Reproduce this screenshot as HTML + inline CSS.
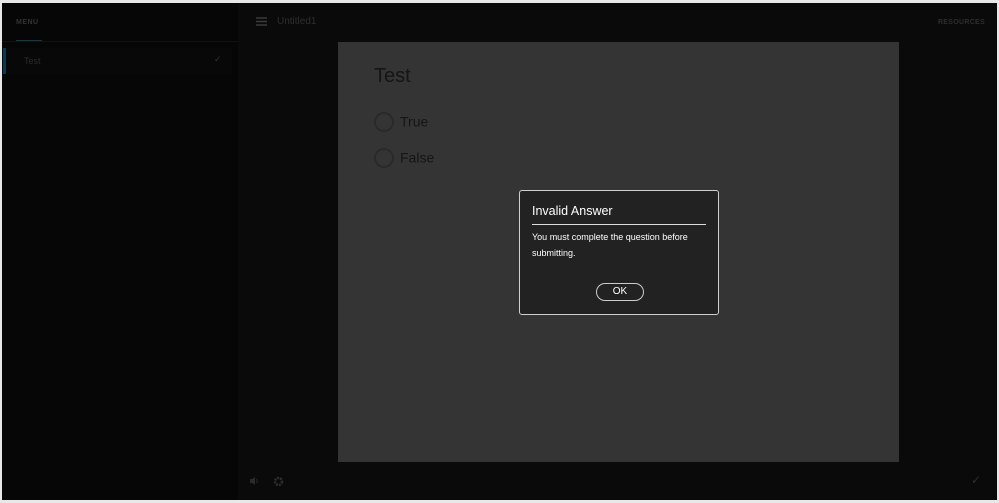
<!DOCTYPE html>
<html><head><style>
body{margin:0;width:999px;height:503px;background:#e8e8e8;position:relative;overflow:hidden;font-family:"Liberation Sans",sans-serif}
.frame{position:absolute;left:2px;top:3px;width:995px;height:497px;background:#0a0a0a}
.side{position:absolute;left:0;top:0;width:236px;height:497px;background:#060606}
.menu{position:absolute;left:14px;top:16px;font-size:7px;font-weight:bold;color:#333;letter-spacing:.5px}
.ul{position:absolute;left:14px;top:37px;width:26px;height:1px;background:#0d3a48}
.sep{position:absolute;left:0;top:38px;width:236px;height:1px;background:#111}
.item{position:absolute;left:0;top:45px;width:230px;height:26px;background:#080808}
.bar{position:absolute;left:1px;top:45px;width:3px;height:26px;background:#0d3a48}
.item span{position:absolute;left:22px;top:8px;font-size:9px;color:#2a2a2a}
.title{position:absolute;left:275px;top:13px;font-size:10px;color:#2e2e2e}
.res{position:absolute;right:12px;top:16px;font-size:7px;font-weight:bold;color:#2e2e2e;letter-spacing:.3px}
.panel{position:absolute;left:336px;top:39px;width:561px;height:420px;background:#343434}
.q{position:absolute;left:36px;top:23px;font-size:20px;color:#151515}
.opt{position:absolute;left:36px;font-size:14px;color:#151515}
.opt i{display:inline-block;width:16px;height:16px;border:2px solid #2a2a2a;border-radius:50%;vertical-align:middle;margin-right:6px;position:relative;top:-1px}
.dlg{position:absolute;left:519px;top:190px;width:198px;height:123px;background:#222;border:1px solid #cfcfcf;border-radius:3px}
.dlg h1{position:absolute;left:12px;top:13px;margin:0;font-size:12.5px;font-weight:normal;color:#fff}
.hr{position:absolute;left:12px;top:33px;width:174px;height:1px;background:#ddd}
.dlg p{position:absolute;left:12px;top:38px;margin:0;width:180px;font-size:9px;line-height:16px;color:#fff}
.ok{position:absolute;left:76px;top:92px;width:46px;height:16px;border:1px solid #ccc;border-radius:9px;color:#fff;font-size:10px;text-align:center;line-height:16px}
</style></head><body>
<div class="frame">
<div class="side"><div class="menu">MENU</div><div class="sep"></div><div class="ul"></div>
<div class="item"><span>Test</span><span style="left:212px;top:6px;color:#333">✓</span></div><div class="bar"></div></div>
<svg style="position:absolute;left:254px;top:14px" width="11" height="9"><path d="M0 1H11M0 4.5H11M0 8H11" stroke="#3a3a3a" stroke-width="1.5"/></svg>
<div class="title">Untitled1</div>
<div class="res">RESOURCES</div>
<div class="panel"><div class="q">Test</div>
<div class="opt" style="top:71px"><i></i>True</div>
<div class="opt" style="top:107px"><i></i>False</div></div>
<svg style="position:absolute;left:247px;top:473px" width="10" height="10"><path d="M1 3H3L6 1V9L3 7H1Z" fill="#2a2a2a"/><path d="M7.5 3Q9 5 7.5 7" stroke="#2a2a2a" fill="none"/></svg>
<svg style="position:absolute;left:271px;top:473px" width="11" height="11"><circle cx="5.5" cy="5.5" r="3.5" stroke="#2e2e2e" stroke-width="2.5" fill="none" stroke-dasharray="2 1"/></svg>
<div style="position:absolute;left:969px;top:470px;color:#2e2e2e;font-size:12px">✓</div>
</div>
<div class="dlg"><h1>Invalid Answer</h1><div class="hr"></div><p>You must complete the question before submitting.</p><div class="ok">OK</div></div>
</body></html>
